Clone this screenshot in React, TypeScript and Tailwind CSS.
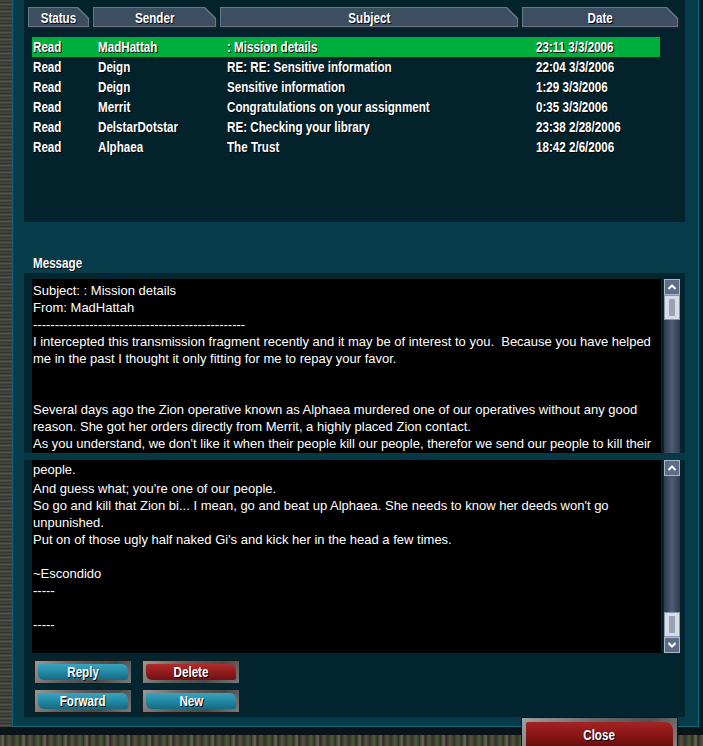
import React from "react";

const rows = [
  ["Read", "MadHattah", ": Mission details", "23:11 3/3/2006"],
  ["Read", "Deign", "RE: RE: Sensitive information", "22:04 3/3/2006"],
  ["Read", "Deign", "Sensitive information", "1:29 3/3/2006"],
  ["Read", "Merrit", "Congratulations on your assignment", "0:35 3/3/2006"],
  ["Read", "DelstarDotstar", "RE: Checking your library", "23:38 2/28/2006"],
  ["Read", "Alphaea", "The Trust", "18:42 2/6/2006"],
];

const box1 = [
  "Subject: : Mission details",
  "From: MadHattah",
  "-------------------------------------------------",
  "I intercepted this transmission fragment recently and it may be of interest to you.  Because you have helped",
  "me in the past I thought it only fitting for me to repay your favor.",
  "",
  "",
  "Several days ago the Zion operative known as Alphaea murdered one of our operatives without any good",
  "reason. She got her orders directly from Merrit, a highly placed Zion contact.",
  "As you understand, we don't like it when their people kill our people, therefor we send our people to kill their",
];

const box2 = [
  "people.",
  "And guess what; you're one of our people.",
  "So go and kill that Zion bi... I mean, go and beat up Alphaea. She needs to know her deeds won't go",
  "unpunished.",
  "Put on of those ugly half naked Gi's and kick her in the head a few times.",
  "",
  "~Escondido",
  "-----",
  "",
  "-----",
];

function B({ children, center }: { children: React.ReactNode; center?: boolean }) {
  return (
    <span
      className={`inline-block whitespace-pre font-bold text-[14px] leading-none text-white [text-shadow:1px_1px_0_#000] scale-x-[0.83] ${
        center ? "origin-center" : "origin-left"
      }`}
    >
      {children}
    </span>
  );
}

function Tab({ label, w }: { label: string; w: string }) {
  return (
    <div className={`${w} h-[22px] relative`}>
      <div className="absolute inset-0 bg-[#1a232c] [clip-path:polygon(0_0,calc(100%-12px)_0,100%_12px,100%_100%,0_100%)]" />
      <div className="absolute left-0 top-0 right-[2px] bottom-[2px] bg-[#66788a] [clip-path:polygon(0_0,calc(100%-11px)_0,100%_11px,100%_100%,0_100%)]" />
      <div className="absolute left-[1px] top-[1px] right-[3px] bottom-[3px] bg-[#3c4e60] [clip-path:polygon(0_0,calc(100%-11px)_0,100%_11px,100%_100%,0_100%)] flex items-center justify-center pt-[1px]">
        <B center>{label}</B>
      </div>
    </div>
  );
}

function Scrollbar({ thumbTop }: { thumbTop: boolean }) {
  const Btn = ({ up }: { up: boolean }) => (
    <div className="w-[16px] h-[16px] border border-[#aeb6c6] bg-[#5d6d88] flex items-center justify-center shrink-0">
      <svg width="10" height="8" viewBox="0 0 10 8">
        {up ? (
          <path d="M1.5 6 L5 2.5 L8.5 6" stroke="#fff" strokeWidth="2" fill="none" />
        ) : (
          <path d="M1.5 2 L5 5.5 L8.5 2" stroke="#fff" strokeWidth="2" fill="none" />
        )}
      </svg>
    </div>
  );
  const Thumb = () => (
    <div className="w-[16px] h-[25px] border border-[#8c96aa] bg-[#d8dce6] flex items-center justify-center shrink-0">
      <div className="w-[6px] h-[17px] bg-[#9aa3b6]" />
    </div>
  );
  return (
    <div className="w-[16px] flex flex-col bg-[linear-gradient(to_right,#2e3b4e,#4e5d74_50%,#2e3b4e)]">
      <Btn up />
      {thumbTop && <Thumb />}
      <div className="flex-1" />
      {!thumbTop && <Thumb />}
      {!thumbTop && <Btn up={false} />}
    </div>
  );
}

function GameButton({ label, red }: { label: string; red?: boolean }) {
  return (
    <div className="w-[98px] h-[24px] bg-[#1b1b1b] p-[1px]">
      <div className="w-full h-full bg-[linear-gradient(135deg,#9a9a9a,#5d5d5d_40%,#4a4a4a_70%,#7a7a7a)] p-[3px]">
        <div
          className={`w-full h-full rounded-tr-[6px] rounded-bl-[6px] rounded-tl-[2px] rounded-br-[2px] flex items-center justify-center ${
            red
              ? "bg-[linear-gradient(to_bottom,#b22c2c,#8a1a1a_60%,#6e1212)]"
              : "bg-[linear-gradient(to_bottom,#3aa3bd,#2088a2_55%,#17687e)]"
          }`}
        >
          <B center>{label}</B>
        </div>
      </div>
    </div>
  );
}

const metal =
  "bg-[repeating-linear-gradient(0deg,#3a3a38_0px,#5a5a55_2px,#2a2a28_3px,#4a4a46_5px,#30302e_7px)]";
const metalBottom =
  "bg-[repeating-linear-gradient(90deg,#3b3a2e_0px,#6a6a58_3px,#2a2a22_5px,#55553f_9px,#33332a_13px,#4e5a3a_17px,#2c2c24_21px)]";

export default function App() {
  return (
    <div
      className="w-[703px] h-[746px] overflow-hidden relative bg-[#0b1519] flex flex-col text-white"
      style={{ fontFamily: '"Liberation Sans", Arial, sans-serif' }}
    >
      <div className="flex h-[727px] shrink-0">
        <div className={`w-[12px] ${metal}`} />
        <div className="w-[687px] border-l border-b border-r border-[#0e6880] bg-[#063b4a] flex flex-col pl-[11px] pr-[13px]">
          {/* list panel */}
          <div className="h-[222px] bg-[#02232b] pt-[7px] shrink-0">
            <div className="flex gap-[2px] pl-[4px]">
              <Tab label="Status" w="w-[63px]" />
              <Tab label="Sender" w="w-[125px]" />
              <Tab label="Subject" w="w-[300px]" />
              <Tab label="Date" w="w-[158px]" />
            </div>
            <div className="mt-[8px] ml-[8px] w-[628px] flex flex-col">
              {rows.map((r, i) => (
                <div key={i} className={`h-[20px] flex items-center ${i === 0 ? "bg-[#00ae3e]" : ""}`}>
                  <div className="w-[66px] pl-[1px]"><B>{r[0]}</B></div>
                  <div className="w-[129px]"><B>{r[1]}</B></div>
                  <div className="w-[309px]"><B>{r[2]}</B></div>
                  <div><B>{r[3]}</B></div>
                </div>
              ))}
            </div>
          </div>
          {/* label */}
          <div className="h-[51px] shrink-0 flex items-end pb-[3px] pl-[9px]">
            <B>Message</B>
          </div>
          {/* message panel */}
          <div className="h-[444px] bg-[#022530] shrink-0 flex flex-col pl-[8px] pr-[5px] pt-[6px]">
            <div className="flex h-[174px] gap-[3px]">
              <div className="flex-1 bg-black pl-[1px] pt-[3px] text-[13px] leading-[17px] overflow-hidden">
                {box1.map((l, i) => (
                  <div key={i} className="h-[17px] whitespace-pre">{l}</div>
                ))}
              </div>
              <Scrollbar thumbTop />
            </div>
            <div className="h-[7px] bg-[#063845] -ml-[8px] -mr-[5px]" />
            <div className="flex h-[193px] gap-[3px]">
              <div className="flex-1 bg-black pl-[1px] pt-[1px] text-[13px] leading-[17px] overflow-hidden">
                {box2.map((l, i) => (
                  <div key={i} className={`${i === 0 ? "h-[19px]" : "h-[17px]"} whitespace-pre`}>{l}</div>
                ))}
              </div>
              <Scrollbar thumbTop={false} />
            </div>
            <div className="flex gap-[10px] mt-[7px] pl-[2px]">
              <GameButton label="Reply" />
              <GameButton label="Delete" red />
            </div>
            <div className="flex gap-[10px] mt-[5px] pl-[2px]">
              <GameButton label="Forward" />
              <GameButton label="New" />
            </div>
          </div>
        </div>
        <div className="w-[4px] bg-[#0a1c22]" />
      </div>
      <div className="h-[8px] bg-[#0a1418] shrink-0" />
      <div className={`h-[11px] shrink-0 ${metalBottom}`} />
      {/* Close button */}
      <div className="absolute left-[521px] top-[717px] w-[157px] h-[34px] bg-[#141414] p-[1px]">
        <div className="w-full h-full bg-[linear-gradient(135deg,#a0a0a0,#6a6a6a_40%,#505050_70%,#888)] p-[4px]">
          <div className="w-full h-full rounded-tr-[8px] rounded-tl-[2px] bg-[linear-gradient(to_bottom,#a52222,#861515_60%,#6a1010)] flex items-start justify-center pt-[6px]">
            <B center>Close</B>
          </div>
        </div>
      </div>
    </div>
  );
}
